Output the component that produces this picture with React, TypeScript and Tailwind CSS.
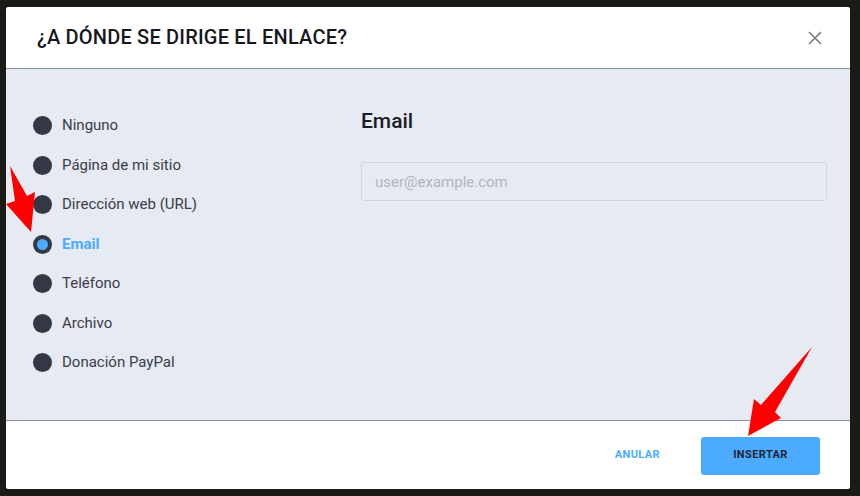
import React, { useState } from "react";

const options = [
  "Ninguno",
  "Página de mi sitio",
  "Dirección web (URL)",
  "Email",
  "Teléfono",
  "Archivo",
  "Donación PayPal",
];

export default function App() {
  const [selected, setSelected] = useState("Email");

  return (
    <div
      className="relative w-[860px] h-[496px] overflow-hidden bg-[#1a1a17] pl-[6px] pt-[7px]"
      style={{ fontFamily: "Roboto, 'Noto Sans', sans-serif" }}
    >
      <div className="w-[844px] h-[482px] bg-white flex flex-col rounded-[2px] overflow-hidden">
        {/* Header */}
        <div className="h-[62px] flex items-center justify-between pl-[31px] pr-[28px] border-b border-[#8a8e9a] shrink-0">
          <h2 className="text-[20px] font-medium tracking-[0.2px] text-[#15171f] uppercase pb-[2px]">
            ¿A dónde se dirige el enlace?
          </h2>
          <button className="text-[#7a7a7a]">
            <svg width="14" height="14" viewBox="0 0 14 14" fill="none" stroke="currentColor" strokeWidth="1.6">
              <path d="M1 1L13 13M13 1L1 13" />
            </svg>
          </button>
        </div>

        {/* Body */}
        <div className="h-[352px] bg-[#e6eaf2] border-b border-[#8a8e9a] flex shrink-0">
          <ul className="w-[355px] pt-[47px] pl-[27px] flex flex-col gap-[20.5px]">
            {options.map((o) => {
              const active = o === selected;
              return (
                <li
                  key={o}
                  onClick={() => setSelected(o)}
                  className="flex items-center gap-[10px] h-[19px] cursor-pointer"
                >
                  <span className="w-[19px] h-[19px] rounded-full bg-[#343744] flex items-center justify-center">
                    {active && <span className="w-[11px] h-[11px] rounded-full bg-[#4aabff]" />}
                  </span>
                  <span
                    className={
                      active
                        ? "text-[15px] font-bold text-[#4aabff]"
                        : "text-[15px] text-[#3a3d4a]"
                    }
                  >
                    {o}
                  </span>
                </li>
              );
            })}
          </ul>
          <div className="flex-1 pt-[38px] pr-[23px]">
            <h3 className="text-[21px] font-medium text-[#1a1d29] leading-[28px]">Email</h3>
            <input
              type="text"
              placeholder="user@example.com"
              className="mt-[27px] w-full h-[39px] rounded-[3px] border border-[#cfd5df] bg-transparent px-[13px] text-[15px] placeholder:text-[#b0b5c0] outline-none"
            />
          </div>
        </div>

        {/* Footer */}
        <div className="flex-1 flex items-center justify-end pr-[30px] pt-[1px] gap-[41px]">
          <button className="text-[11px] font-bold text-[#4aabff] tracking-[0.4px]">ANULAR</button>
          <button className="w-[119px] h-[38px] rounded-[3px] bg-[#4aabff] text-[11px] font-bold text-[#1e2433] tracking-[0.4px]">
            INSERTAR
          </button>
        </div>
      </div>

      {/* annotation arrows */}
      <svg className="absolute left-0 top-0 pointer-events-none" width="860" height="496">
        <polygon points="10,166 27,196 35,192 31,232 6,204 15,201" fill="#ff0000" />
        <polygon points="812,347 775,412 781,418 748,436 754,399 761,405" fill="#ff0000" />
      </svg>
    </div>
  );
}
